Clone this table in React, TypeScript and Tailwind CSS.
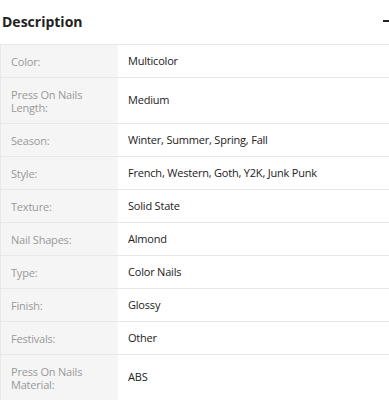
import React from "react";

const rows: [string, string, boolean?][] = [
  ["Color:", "Multicolor"],
  ["Press On Nails Length:", "Medium", true],
  ["Season:", "Winter, Summer, Spring, Fall"],
  ["Style:", "French, Western, Goth, Y2K, Junk Punk"],
  ["Texture:", "Solid State"],
  ["Nail Shapes:", "Almond"],
  ["Type:", "Color Nails"],
  ["Finish:", "Glossy"],
  ["Festivals:", "Other"],
  ["Press On Nails Material:", "ABS", true],
];

export default function App() {
  return (
    <div className="w-[389px] h-[400px] overflow-hidden bg-white" style={{ fontFamily: '"Open Sans", "Noto Sans", sans-serif' }}>
      <div className="flex items-center justify-between h-[44px] pl-[2px] pb-[2px]">
        <span className="text-[14px] font-bold text-[#222]">Description</span>
        <span className="w-[6px] h-[2px] bg-[#222]" />
      </div>
      <div className="border-t border-l border-[#e8e8e8]">
        {rows.map(([k, v, tall]) => (
          <div key={k} className={`flex border-b border-[#e8e8e8] ${tall ? "h-[46px]" : "h-[33px]"}`}>
            <div className="w-[117px] bg-[#f5f5f5] flex items-center pl-[10px] pr-2 text-[11px] leading-[13px] tracking-[-0.2px] text-[#999]">
              {tall ? <span className="w-[80px]">{k}</span> : k}
            </div>
            <div className="flex-1 flex items-center pl-[10px] text-[11px] tracking-[-0.2px] text-[#222]">{v}</div>
          </div>
        ))}
      </div>
    </div>
  );
}
